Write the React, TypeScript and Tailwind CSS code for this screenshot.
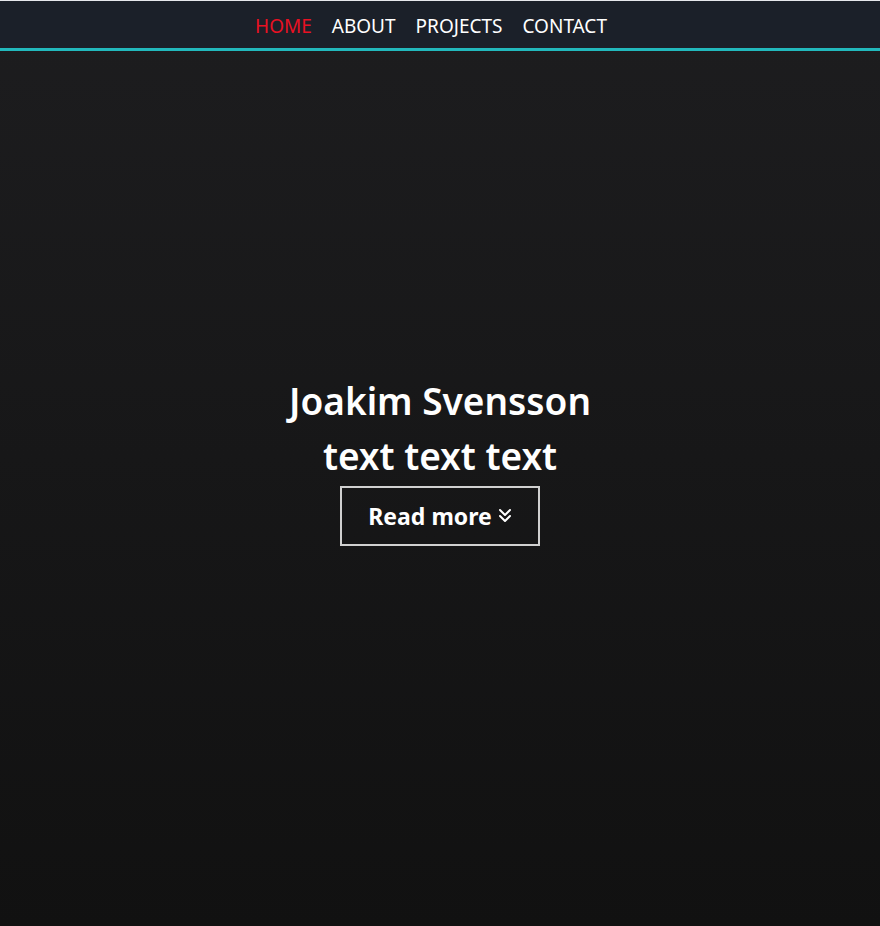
import React from "react";

export default function App() {
  return (
    <div
      className="w-full h-[926px] flex flex-col bg-gradient-to-b from-[#1d1d1f] to-[#111111] text-white"
      style={{ fontFamily: '"Noto Sans", "Open Sans", sans-serif' }}
    >
      <div className="h-px bg-[#e6e8ec]" />
      <nav className="h-[50px] bg-[#1b2029] border-b-[3px] border-[#22b8bc] flex items-center justify-center gap-[20px] text-[19px] leading-none pr-[18px] pt-[3px]">
        <a className="text-[#e81123]">HOME</a>
        <a>ABOUT</a>
        <a>PROJECTS</a>
        <a>CONTACT</a>
      </nav>
      <main className="flex-1 flex flex-col items-center justify-center pb-[58px]">
        <h1 className="text-[37px] font-semibold leading-[56px]">Joakim Svensson</h1>
        <h2 className="text-[37px] font-semibold leading-[56px] -mt-[1px]">text text text</h2>
        <button className="mt-[2px] w-[200px] h-[60px] border-2 border-[#d0d0d0] flex items-center justify-center gap-[6px] text-[23px] font-bold">
          Read more
          <svg width="14" height="16" viewBox="0 0 14 16" fill="none" stroke="white" strokeWidth="2" strokeLinecap="round" strokeLinejoin="round">
            <path d="M2 2 L7 7 L12 2" />
            <path d="M2 8 L7 13 L12 8" />
          </svg>
        </button>
      </main>
    </div>
  );
}
